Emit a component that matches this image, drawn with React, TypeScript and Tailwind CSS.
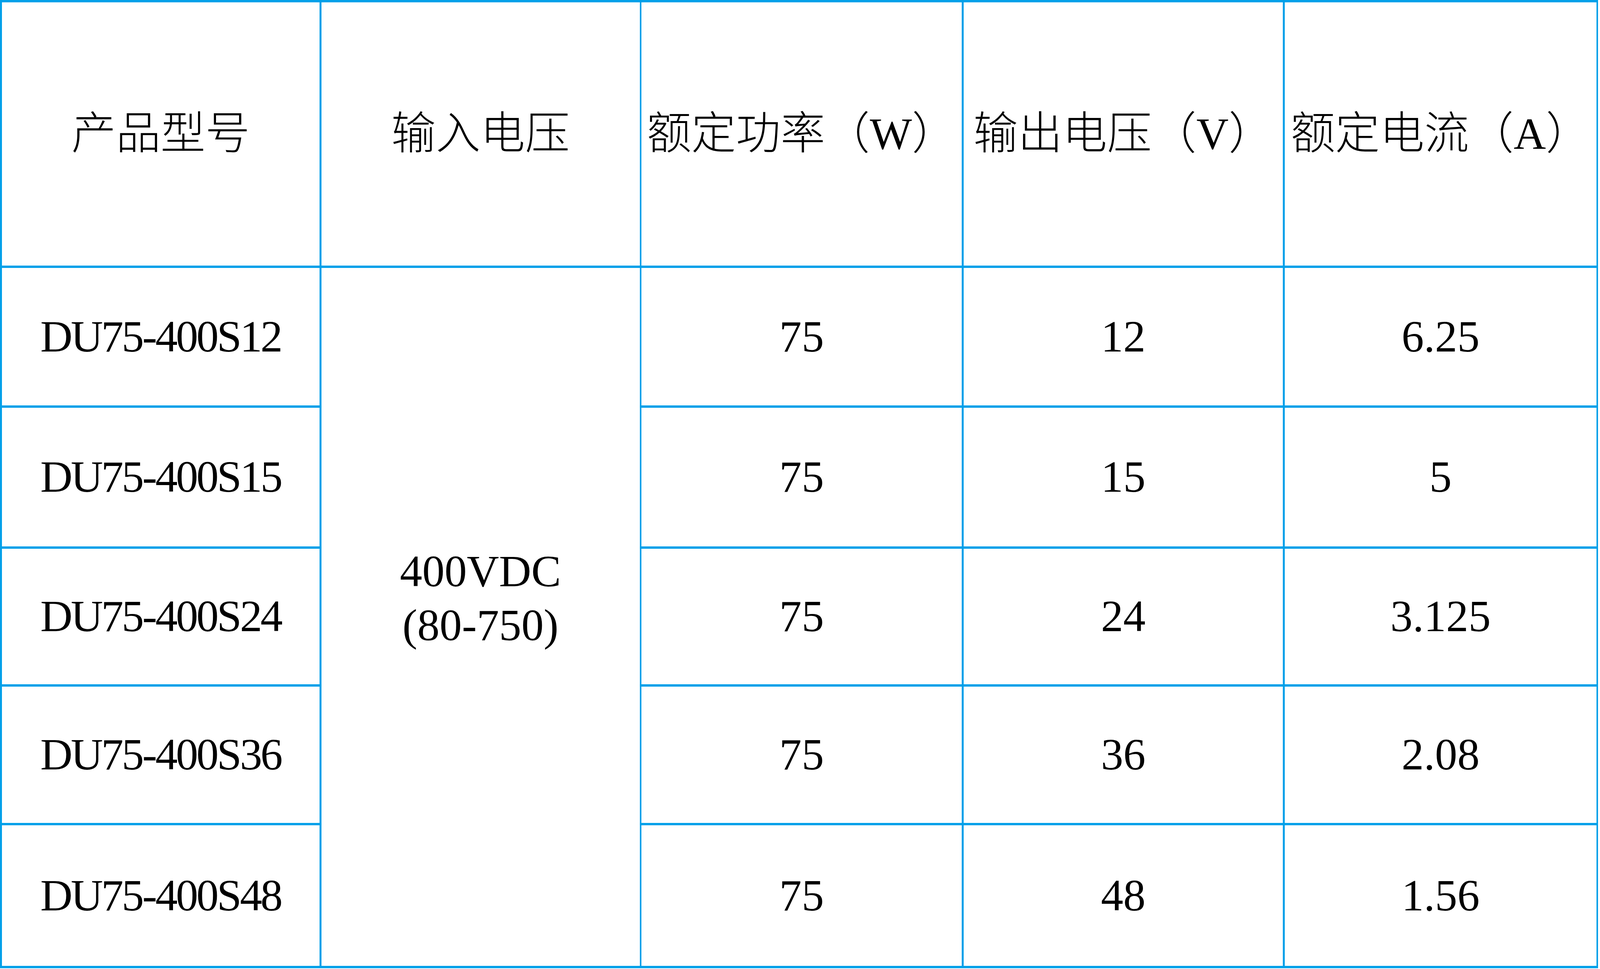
import React from "react";

const rows = [
  { model: "DU75-400S12", power: "75", volt: "12", amp: "6.25" },
  { model: "DU75-400S15", power: "75", volt: "15", amp: "5" },
  { model: "DU75-400S24", power: "75", volt: "24", amp: "3.125" },
  { model: "DU75-400S36", power: "75", volt: "36", amp: "2.08" },
  { model: "DU75-400S48", power: "75", volt: "48", amp: "1.56" },
];

const headers = ["产品型号", "输入电压", "额定功率（W）", "输出电压（V）", "额定电流（A）"];

const cell = "bg-white flex items-center justify-center leading-none";

export default function App() {
  return (
    <div
      className="w-screen h-screen overflow-hidden bg-white text-black text-[min(2.789vw,6.046vh)] font-light"
      style={{ fontFamily: '"Liberation Serif", "Noto Sans CJK SC", serif' }}
    >
      <div className="w-[99.89vw] h-[99.92vh] grid grid-cols-[1068fr_1070fr_1077fr_1073fr_1048fr] grid-rows-[674fr_352fr_355fr_347fr_349fr_360fr] gap-x-[0.1115vw] gap-y-[0.242vh] px-[0.1115vw] py-[0.242vh] bg-[#00a0e9]">
        {/* header */}
        {headers.map((h) => (
          <div key={h} className={cell}>
            {h}
          </div>
        ))}

        {rows.map((r, i) => (
          <React.Fragment key={r.model}>
            <div className={cell + " tracking-[-0.04em]"}>{r.model}</div>
            {i === 0 && (
              <div className="bg-white row-span-5 flex flex-col items-center justify-center leading-[1.2em] pb-[3.87vh]">
                <span>400VDC</span>
                <span>(80-750)</span>
              </div>
            )}
            <div className={cell}>{r.power}</div>
            <div className={cell}>{r.volt}</div>
            <div className={cell}>{r.amp}</div>
          </React.Fragment>
        ))}
      </div>
    </div>
  );
}
